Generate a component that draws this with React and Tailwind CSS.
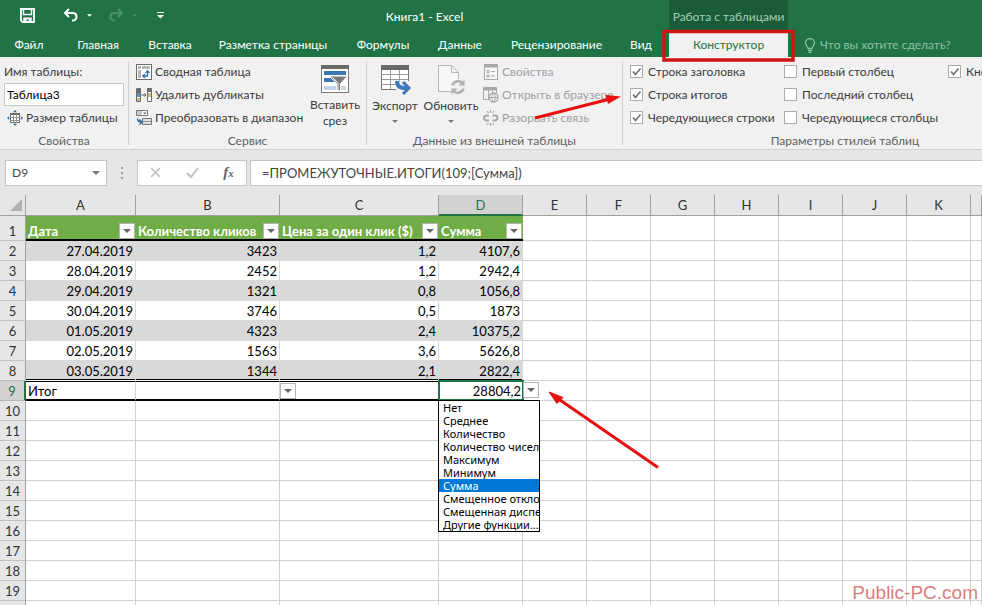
import { useState } from "react";

const TABS = [
  { label: "Файл", width: "w-[58px]" },
  { label: "Главная", width: "w-[80px]" },
  { label: "Вставка", width: "w-[64px]" },
  { label: "Разметка страницы", width: "w-[142px]" },
  { label: "Формулы", width: "w-[78px]" },
  { label: "Данные", width: "w-[76px]" },
  { label: "Рецензирование", width: "w-[117px]" },
  { label: "Вид", width: "w-[52px]" },
];

const STYLE_OPTIONS = [
  {
    width: "w-[154px]",
    items: [
      { label: "Строка заголовка", checked: true },
      { label: "Строка итогов", checked: true },
      { label: "Чередующиеся строки", checked: true },
    ],
  },
  {
    width: "w-[164px]",
    items: [
      { label: "Первый столбец", checked: false },
      { label: "Последний столбец", checked: false },
      { label: "Чередующиеся столбцы", checked: false },
    ],
  },
  { width: "w-[120px]", items: [{ label: "Кнопка фильтра", checked: true }] },
];

const COLUMNS = [
  { name: "A", width: "w-[110px]" },
  { name: "B", width: "w-[144px]" },
  { name: "C", width: "w-[159px]" },
  { name: "D", width: "w-[84px]" },
  { name: "E", width: "w-[64px]" },
  { name: "F", width: "w-[64px]" },
  { name: "G", width: "w-[64px]" },
  { name: "H", width: "w-[64px]" },
  { name: "I", width: "w-[64px]" },
  { name: "J", width: "w-[64px]" },
  { name: "K", width: "w-[64px]" },
  { name: "", width: "w-auto" },
];

const HEADERS = ["Дата", "Количество кликов", "Цена за один клик ($)", "Сумма"];

const DATA = [
  ["27.04.2019", "3423", "1,2", "4107,6"],
  ["28.04.2019", "2452", "1,2", "2942,4"],
  ["29.04.2019", "1321", "0,8", "1056,8"],
  ["30.04.2019", "3746", "0,5", "1873"],
  ["01.05.2019", "4323", "2,4", "10375,2"],
  ["02.05.2019", "1563", "3,6", "5626,8"],
  ["03.05.2019", "1344", "2,1", "2822,4"],
];

const EMPTY_ROWS = [10, 11, 12, 13, 14, 15, 16, 17, 18, 19, ""];

const FUNCTIONS = [
  "Нет",
  "Среднее",
  "Количество",
  "Количество чисел",
  "Максимум",
  "Минимум",
  "Сумма",
  "Смещенное отклонение",
  "Смещенная дисперсия",
  "Другие функции...",
];

function Caret({ className = "" }) {
  return (
    <svg viewBox="0 0 8 4" className={`h-1 w-2 ${className}`} fill="currentColor">
      <path d="M0 0h8L4 4z" />
    </svg>
  );
}

/* ---------- Icons ---------- */

function SaveIcon() {
  return (
    <svg width="15" height="15" viewBox="0 0 15 15" fill="none" stroke="white" strokeWidth="1.8">
      <path d="M1 1h13v13H2.500L1 12.500z" />
      <path d="M3.500 1v5.500h8V1" strokeWidth="1.400" />
      <path d="M3.300 9.500h8.400V14h-3v-2.500H6.500V14H3.300z" fill="white" stroke="none" />
    </svg>
  );
}

function UndoIcon({ flip }) {
  return (
    <svg width="16" height="14" viewBox="0 0 16 14" fill="none" stroke="currentColor" strokeWidth="2" className={flip ? "-scale-x-100" : ""}>
      <path d="M6 1L2 5l4 4" />
      <path d="M2 5h7.500c2.500 0 4 1.500 4 3.700S12 12.500 9 12.500" />
    </svg>
  );
}

function PivotIcon() {
  return (
    <svg width="16" height="16" viewBox="0 0 16 16" fill="none">
      <rect x=".5" y=".5" width="15" height="15" fill="white" stroke="#6a6a6a" />
      <path d="M2 2h3v3H2zM6 2h8v3H6zM2 6h3v8H2z" fill="#b8b8b8" />
      <path d="M7 12h4.500V7.500" stroke="#2f6da8" strokeWidth="1.300" />
      <path d="M9 10l-2.300 2L9 14M9.500 9l2-2.300 2 2.300" stroke="#2f6da8" strokeWidth="1.200" />
    </svg>
  );
}

function DuplicatesIcon() {
  return (
    <svg width="16" height="14" viewBox="0 0 16 14" fill="none">
      <path d="M.5.5h4v13h-4zM11.500.5h4v13h-4z" fill="white" stroke="#6a6a6a" />
      <path d="M1 1h3v4H1zM12 1h3v3h-3z" fill="#6a6a6a" />
      <path d="M1 5h3v4H1z" fill="#5f8fbe" />
      <path d="M1 10h3v3H1zM12 5h3v4h-3z" fill="#cdbb8e" />
      <path d="M5.500 7H10M8.500 5.500L10 7 8.500 8.500" stroke="#555" />
    </svg>
  );
}

function ConvertIcon() {
  return (
    <svg width="16" height="16" viewBox="0 0 16 16" fill="none">
      <path d="M.5.5h11v5H.5z" fill="white" stroke="#777" />
      <path d="M1 1h5v4H1z" fill="#c9c9c9" />
      <path d="M7 2.500h3.500L8.750 4.300z" fill="#555" />
      <path d="M6.500 8.500h9v6h-9z" fill="#dcdcdc" stroke="#777" />
      <path d="M7 11.500h8" stroke="#999" />
      <path d="M1.500 8.500c0 2.500 1 3.500 4 3.500M3.500 9.500L6 12l-2.500 2.500" stroke="#2f6da8" strokeWidth="1.500" />
    </svg>
  );
}

function ResizeIcon() {
  return (
    <svg width="16" height="16" viewBox="0 0 16 16" fill="none">
      <rect x="3.500" y="3.500" width="9" height="9" fill="white" stroke="#6a6a6a" />
      <path d="M3 4h10" stroke="#6a6a6a" strokeWidth="2" />
      <path d="M3 7.500h10M3 10.500h10M6.500 4v9M9.500 4v9" stroke="#8f8f8f" />
      <path d="M6 2.200L8 0l2 2.200zM6 13.800L8 16l2-2.200zM2.200 6L0 8l2.200 2zM13.800 6L16 8l-2.200 2z" fill="#2f6da8" />
    </svg>
  );
}

function SlicerIcon() {
  return (
    <svg width="30" height="30" viewBox="0 0 30 30" fill="none">
      <rect x="1.500" y="1.500" width="27" height="27" fill="white" stroke="#777" />
      <path d="M1 1h28v4H1z" fill="#6a6a6a" />
      <path d="M4 7h22v4H4zM4 14h11v4H4z" fill="#3b78b4" />
      <path d="M4 22h22v4H4z" fill="#c5d3e6" />
      <path d="M9.500 12h18l-7 7.500v8l-4-2.500v-5.500z" fill="#7a7a7a" stroke="white" />
      <path d="M12.500 13.500l5.500 5.500v6" stroke="white" />
    </svg>
  );
}

function ExportIcon() {
  return (
    <svg width="31" height="31" viewBox="0 0 31 31" fill="none">
      <path d="M1.500 1.500h27v24h-27z" fill="white" stroke="#777" />
      <path d="M1 1h28v5H1z" fill="#6a6a6a" />
      <path d="M2 10.500h26M2 15.500h26M2 20.500h26M10.500 6v19M19.500 6v19" stroke="#9a9a9a" />
      <path d="M15 17h15v13h-9c-4-1-6-4-6-13z" fill="#f1f1f1" />
      <path d="M17 17c0 5 2.500 7.500 10 7" stroke="#3b78b4" strokeWidth="4" />
      <path d="M23 18l6 6-6 6" stroke="#3b78b4" strokeWidth="3" />
    </svg>
  );
}

function RefreshIcon() {
  return (
    <svg width="29" height="31" viewBox="0 0 29 31" fill="none">
      <path d="M1.500 1.500h13l7 7v19h-20z" fill="#f7f7f7" stroke="#b5b5b5" />
      <path d="M14.500 1.500v7h7" stroke="#b5b5b5" />
      <circle cx="21" cy="23" r="8" fill="#f1f1f1" />
      <path d="M15.500 21.500a6 6 0 0 1 10.500-2M26.500 24.500a6 6 0 0 1-10.500 2" stroke="#b0b0b0" strokeWidth="2.500" />
      <path d="M27.500 15.500v6h-6zM14.500 30.500v-6h6z" fill="#b0b0b0" />
    </svg>
  );
}

function PropertiesIcon() {
  return (
    <svg width="15" height="16" viewBox="0 0 15 16" fill="none" stroke="#a8a8a8">
      <rect x=".5" y=".5" width="13" height="15" fill="#f7f7f7" />
      <path d="M1 2h12" strokeWidth="3" />
      <path d="M3 6.500h2v2H3zM3 11h2v2H3zM7 7.500h4M7 12h4" />
    </svg>
  );
}

function BrowserIcon() {
  return (
    <svg width="16" height="16" viewBox="0 0 16 16" fill="none" stroke="#a8a8a8">
      <path d="M6 12.500H.5V.5h13V6M5.500 3v9" />
      <path d="M1 2h12" strokeWidth="3" />
      <path d="M9.500 4v2" />
      <circle cx="10.500" cy="10.500" r="4.500" fill="#f1f1f1" strokeWidth="1.300" />
      <path d="M6 10.500h9M10.500 6c-2.500 3-2.500 6 0 9M10.500 6c2.500 3 2.500 6 0 9" />
    </svg>
  );
}

function UnlinkIcon() {
  return (
    <svg width="16" height="16" viewBox="0 0 16 16" fill="none" stroke="#a8a8a8">
      <path d="M6 5.500H3.500a2.500 2.500 0 0 0 0 5H6M9.500 5.500H12a2.500 2.500 0 0 1 0 5H9.500" strokeWidth="2" />
      <path d="M7.500 0v3M4 1l1.500 2M11 1L9.500 3M7.500 13v3M4 15l1.500-2M11 15l-1.500-2" strokeWidth="1.200" />
    </svg>
  );
}

function BulbIcon() {
  return (
    <svg width="12" height="15" viewBox="0 0 12 15" fill="none" stroke="currentColor" strokeWidth="1.300">
      <path d="M4 10.500C4 8.500 1.500 7.500 1.500 5a4.500 4.300 0 0 1 9 0c0 2.500-2.500 3.500-2.500 5.500z" />
      <path d="M4 12.500h4M4.500 14.300h3" />
    </svg>
  );
}

/* ---------- Ribbon ---------- */

function RibbonGroup({ title, className, children }) {
  return (
    <section className={`flex shrink-0 flex-col pt-[3px] ${className}`}>
      <div className="flex h-[69px]">{children}</div>
      <h2 className="text-center leading-6 text-[#5f5f5f]">{title}</h2>
    </section>
  );
}

function Separator() {
  return <div className="mt-1 mb-1 w-px shrink-0 bg-[#d0d0d0]" />;
}

function SmallButton({ icon, label, disabled }) {
  return (
    <button disabled={disabled} className="flex h-[23px] items-center gap-[3px] whitespace-nowrap disabled:text-[#a0a0a0]">
      <span className="flex w-4 justify-center">{icon}</span>
      {label}
    </button>
  );
}

function LargeButton({ icon, label, caret, className }) {
  return (
    <button className={`flex flex-col items-center pt-1 leading-4 ${className}`}>
      <span className="flex h-[34px] items-start">{icon}</span>
      <span>{label}</span>
      {caret && <Caret className="mt-[6px] h-[3px] w-[6px] text-[#777]" />}
    </button>
  );
}

function StyleCheckbox({ label, checked }) {
  const [on, setOn] = useState(checked);
  return (
    <label className="flex h-[23px] items-center gap-[5px] whitespace-nowrap">
      <span className="grid">
        <input
          type="checkbox"
          checked={on}
          onChange={() => setOn(!on)}
          className="col-start-1 row-start-1 size-[13px] appearance-none border border-[#ababab] bg-white"
        />
        {on && (
          <svg viewBox="0 0 13 13" className="pointer-events-none col-start-1 row-start-1 size-[13px]" fill="none" stroke="#707070" strokeWidth="1.600">
            <path d="M3 6.500l2.500 3L10.500 3.500" />
          </svg>
        )}
      </span>
      {label}
    </label>
  );
}

function TitleBar() {
  return (
    <header className="flex h-[57px] shrink-0 overflow-hidden bg-[#217346] text-white">
      <div className="flex w-[669px] shrink-0 flex-col">
        <div className="flex h-[33px] items-center">
          <div className="flex w-[180px] items-center pl-5 pb-[3px]">
            <button aria-label="Сохранить"><SaveIcon /></button>
            <button aria-label="Отменить" className="ml-7 flex items-center gap-2">
              <UndoIcon />
              <Caret className="h-[3px] w-[5px]" />
            </button>
            <button aria-label="Вернуть" disabled className="ml-4 flex items-center gap-2 text-[#4d9069]">
              <UndoIcon flip />
              <Caret className="h-[3px] w-[5px]" />
            </button>
            <button aria-label="Настройка панели" className="ml-5">
              <svg width="7" height="7" viewBox="0 0 7 7" fill="white">
                <path d="M0 0h7v1H0zM0 3h7L3.500 6.500z" />
              </svg>
            </button>
          </div>
          <h1 className="flex-1 text-center">Книга1 - Excel</h1>
        </div>
        <nav className="flex h-6">
          {TABS.map((t) => (
            <button key={t.label} className={`${t.width} whitespace-nowrap`}>{t.label}</button>
          ))}
        </nav>
      </div>
      <div className="flex w-[119px] shrink-0 flex-col">
        <div className="flex h-[33px] items-center justify-center bg-[#1a5c38] whitespace-nowrap text-[#a5cdb5]">
          Работа с таблицами
        </div>
        <button className="h-6 w-full bg-[#f1f1f1] text-[#217346]">Конструктор</button>
      </div>
      <div className="flex flex-1 items-end pl-4">
        <button className="flex h-6 items-center gap-1 whitespace-nowrap text-[#8fc0a3]">
          <BulbIcon />
          Что вы хотите сделать?
        </button>
      </div>
    </header>
  );
}

function Ribbon() {
  return (
    <div className="flex h-[93px] shrink-0 overflow-hidden border-b border-[#d2d2d2] bg-[#f1f1f1] text-[#3b3b3b]">
      <RibbonGroup title="Свойства" className="w-[128px]">
        <div className="flex flex-col pl-1">
          <label htmlFor="table-name" className="leading-[23px]">Имя таблицы:</label>
          <input id="table-name" defaultValue="Таблица3" className="h-[23px] w-[120px] border border-[#c6c6c6] bg-white px-[2px] text-black" />
          <div className="pl-[3px]">
            <SmallButton icon={<ResizeIcon />} label="Размер таблицы" />
          </div>
        </div>
      </RibbonGroup>
      <Separator />
      <RibbonGroup title="Сервис" className="w-[237px]">
        <div className="flex w-[178px] flex-col pl-[7px]">
          <SmallButton icon={<PivotIcon />} label="Сводная таблица" />
          <SmallButton icon={<DuplicatesIcon />} label="Удалить дубликаты" />
          <SmallButton icon={<ConvertIcon />} label="Преобразовать в диапазон" />
        </div>
        <LargeButton icon={<SlicerIcon />} label={<>Вставить<br />срез</>} className="w-14" />
      </RibbonGroup>
      <Separator />
      <RibbonGroup title="Данные из внешней таблицы" className="w-[255px]">
        <LargeButton icon={<ExportIcon />} label="Экспорт" caret className="w-14" />
        <LargeButton icon={<RefreshIcon />} label="Обновить" caret className="w-14" />
        <div className="flex flex-col pl-1">
          <SmallButton icon={<PropertiesIcon />} label="Свойства" disabled />
          <SmallButton icon={<BrowserIcon />} label="Открыть в браузере" disabled />
          <SmallButton icon={<UnlinkIcon />} label="Разорвать связь" disabled />
        </div>
      </RibbonGroup>
      <Separator />
      <RibbonGroup title="Параметры стилей таблиц" className="w-[444px]">
        <div className="flex pl-[7px]">
          {STYLE_OPTIONS.map((col) => (
            <div key={col.items[0].label} className={`flex shrink-0 flex-col ${col.width}`}>
              {col.items.map((item) => (
                <StyleCheckbox key={item.label} {...item} />
              ))}
            </div>
          ))}
        </div>
      </RibbonGroup>
    </div>
  );
}

function FormulaBar() {
  return (
    <div className="flex h-[45px] shrink-0 items-center bg-[#e6e6e6] pl-[5px] text-[13px] text-[#444]">
      <div className="flex h-[26px] w-[102px] items-center border border-[#c6c6c6] bg-white">
        <input aria-label="Имя ячейки" defaultValue="D9" className="w-0 flex-1 pl-[6px] text-xs" />
        <button aria-label="Список имён" className="px-[6px] text-[#777]"><Caret /></button>
      </div>
      <svg width="2" height="12" viewBox="0 0 2 12" fill="#a0a0a0" className="mx-[14px]">
        <path d="M0 0h2v2H0zM0 5h2v2H0zM0 10h2v2H0z" />
      </svg>
      <div className="flex h-[26px] w-[110px] items-center justify-around border border-[#c6c6c6] bg-white">
        <button aria-label="Отмена">
          <svg width="11" height="11" viewBox="0 0 11 11" stroke="#c0c0c0" strokeWidth="1.600"><path d="M1 1l9 9M10 1l-9 9" /></svg>
        </button>
        <button aria-label="Ввод">
          <svg width="13" height="11" viewBox="0 0 13 11" fill="none" stroke="#c0c0c0" strokeWidth="2"><path d="M1 6l4 4 7-9" /></svg>
        </button>
        <button aria-label="Вставить функцию" className="font-['Liberation_Serif',serif] text-[15px] leading-4 font-bold text-[#666] italic">
          f<span className="text-[11px]">x</span>
        </button>
      </div>
      <input
        aria-label="Строка формул"
        defaultValue="=ПРОМЕЖУТОЧНЫЕ.ИТОГИ(109;[Сумма])"
        className="ml-[3px] h-[26px] flex-1 border border-r-0 border-[#c6c6c6] bg-white pl-[11px]"
      />
    </div>
  );
}

/* ---------- Sheet ---------- */

function CellButton({ label, className = "", onClick }) {
  return (
    <button
      aria-label={label}
      onClick={onClick}
      className={`flex size-4 shrink-0 items-center justify-center border border-[#b5b5b5] bg-white text-[#666] ${className}`}
    >
      <Caret />
    </button>
  );
}

function RowHeader({ children, active }) {
  return (
    <th
      scope="row"
      className={
        active
          ? "border-r-2 border-b border-r-[#217346] border-b-[#b5b5b5] bg-[#d2d2d2] p-0 text-center align-bottom font-normal text-[#217346]"
          : "border-r border-b border-r-[#a0a0a0] border-b-[#c0c0c0] bg-[#e6e6e6] p-0 text-center align-bottom font-normal text-[#333]"
      }
    >
      {children}
    </th>
  );
}

function EmptyCells({ count }) {
  return Array.from({ length: count }, (_, i) => (
    <td key={i} className="border-r border-b border-[#d0d0d0] p-0" />
  ));
}

function FunctionList({ value, onSelect }) {
  return (
    <ul
      role="listbox"
      className="absolute top-full -left-px z-10 -mt-px w-[102px] overflow-hidden border border-black bg-white text-left font-['Noto_Sans',sans-serif] text-[11px] leading-[13px] text-black"
    >
      {FUNCTIONS.map((f) => (
        <li key={f} role="option" aria-selected={f === value}>
          <button
            onClick={() => onSelect(f)}
            className={`block h-[13px] w-full overflow-hidden pl-1 text-left whitespace-nowrap ${f === value ? "bg-[#0078d7] text-white" : ""}`}
          >
            {f}
          </button>
        </li>
      ))}
    </ul>
  );
}

function Sheet() {
  const [open, setOpen] = useState(true);
  const [fn, setFn] = useState("Сумма");

  return (
    <main className="min-h-0 flex-1 overflow-hidden bg-white">
      <table className="w-full table-fixed border-separate border-spacing-0 text-[13px] leading-[18px] text-black">
        <colgroup>
          <col className="w-[26px]" />
          {COLUMNS.map((c, i) => (
            <col key={i} className={c.width} />
          ))}
        </colgroup>
        <thead>
          <tr className="h-[21px]">
            <td className="border-r border-b border-[#a0a0a0] bg-[#e6e6e6] p-0">
              <svg width="12" height="12" viewBox="0 0 12 12" fill="#b2b2b2" className="ml-[10px]">
                <path d="M12 0v12H0z" />
              </svg>
            </td>
            {COLUMNS.map((c, i) => (
              <th
                key={i}
                scope="col"
                className={
                  c.name === "D"
                    ? "border-r border-b-2 border-r-[#a0a0a0] border-b-[#217346] bg-[#d2d2d2] p-0 font-normal text-[#217346]"
                    : "border-r border-b border-[#a0a0a0] bg-[#e6e6e6] p-0 font-normal text-[#333]"
                }
              >
                {c.name}
              </th>
            ))}
          </tr>
        </thead>
        <tbody>
          <tr className="h-[25px]">
            <RowHeader>1</RowHeader>
            {HEADERS.map((h) => (
              <td key={h} className="border-b-2 border-black bg-[#70ad47] p-0 align-bottom">
                <div className="flex items-end justify-between pr-px pl-[2px] leading-4 font-bold text-white">
                  <span className="w-0 flex-1 whitespace-nowrap">{h}</span>
                  <CellButton label={`Фильтр: ${h}`} />
                </div>
              </td>
            ))}
            <EmptyCells count={8} />
          </tr>
          {DATA.map((row, r) => (
            <tr key={row[0]} className="h-5">
              <RowHeader>{r + 2}</RowHeader>
              {row.map((v, i) => (
                <td
                  key={i}
                  className={`border-r border-b border-r-[#d9d9d9] p-0 pr-[2px] text-right ${r % 2 === 0 ? "bg-[#d9d9d9]" : ""} ${
                    r === DATA.length - 1 ? "border-b-white shadow-[inset_0_-1px_0_black]" : "border-b-[#d9d9d9]"
                  }`}
                >
                  {v}
                </td>
              ))}
              <EmptyCells count={8} />
            </tr>
          ))}
          <tr className="h-5">
            <RowHeader active>9</RowHeader>
            <td className="border-t border-r border-b-2 border-y-black border-r-[#d0d0d0] p-0 pl-[2px] leading-4">Итог</td>
            <td className="border-t border-r border-b-2 border-y-black border-r-[#d0d0d0] p-0" />
            <td className="border-t border-b-2 border-black p-0">
              <CellButton label="Функция итога: Цена" />
            </td>
            <td className="relative p-0 pr-[2px] text-right">
              28804,2
              <div className="pointer-events-none absolute -top-px bottom-0 -right-px -left-px border-2 border-[#217346]" />
              <CellButton label="Функция итога: Сумма" className="absolute top-px left-full" onClick={() => setOpen(!open)} />
              {open && <FunctionList value={fn} onSelect={setFn} />}
            </td>
            <EmptyCells count={8} />
          </tr>
          {EMPTY_ROWS.map((n) => (
            <tr key={n} className="h-5">
              <RowHeader>{n}</RowHeader>
              <EmptyCells count={12} />
            </tr>
          ))}
        </tbody>
      </table>
    </main>
  );
}

/* Red frame and arrows drawn over the window */
function Annotations() {
  return (
    <svg className="pointer-events-none absolute top-0 left-0 z-20" width="700" height="500" viewBox="0 0 700 500" overflow="visible">
      <rect x="664" y="31.500" width="129" height="28.500" fill="none" stroke="#d01414" strokeWidth="3.500" />
      <g stroke="#e80e0e" fill="#e80e0e">
        <path d="M535 118L608 99.500" strokeWidth="3" />
        <path d="M621 96.500L605.500 95l2.500 9z" stroke="none" />
        <path d="M658 467.500L560 400" strokeWidth="3" />
        <path d="M549 392l14 5.500-6 6z" />
      </g>
    </svg>
  );
}

export default function App() {
  return (
    <div className="relative flex h-screen flex-col overflow-hidden bg-white font-['Lato',sans-serif] text-xs">
      <TitleBar />
      <Ribbon />
      <FormulaBar />
      <Sheet />
      <Annotations />
      <span className="absolute right-1 bottom-0 font-['Liberation_Sans',sans-serif] text-[19px] leading-6 text-[#dc7c7c]">
        Public-PC.com
      </span>
    </div>
  );
}
